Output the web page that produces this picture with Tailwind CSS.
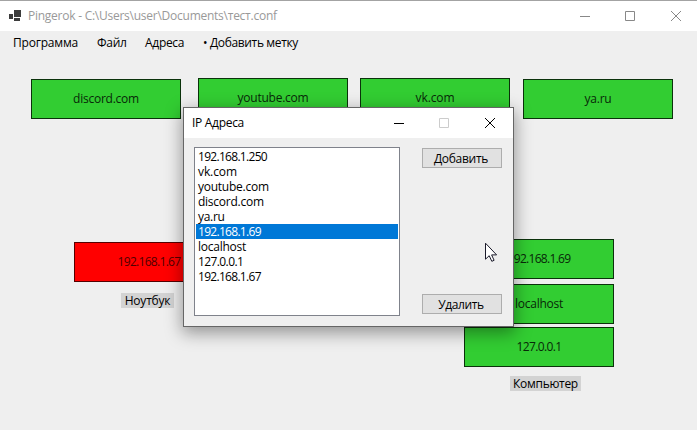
<!DOCTYPE html>
<html lang="ru">
<head>
<meta charset="utf-8">
<title>Pingerok</title>
<script src="https://cdn.jsdelivr.net/npm/@tailwindcss/browser@4"></script>
</head>
<body class="h-[430px] w-[697px] overflow-hidden bg-[#efefef] font-['Open_Sans','Noto_Sans',sans-serif] text-[12px] leading-[15px] text-black">
<div class="relative flex h-[430px] w-[697px] flex-col overflow-hidden">
  <header class="flex h-[31px] shrink-0 items-center border-t border-[#a3a3a3] bg-white text-[#999]">
    <svg class="ml-[9px] h-[12px] w-[12px] shrink-0" viewBox="0 0 12 12" fill="#3c3c3c" shape-rendering="crispEdges"><path d="M5 0h7v7H5zM0 4h4v5H0zM5 8h6v3H5z"/></svg>
    <span class="ml-[7px] w-[552px] pb-px whitespace-nowrap tracking-[-0.25px]">Pingerok - C:\Users\user\Documents\тест.conf</span>
    <svg class="h-[12px] w-[104px] shrink-0" viewBox="0 0 104 12" fill="none" stroke="#888"><path d="M0 6.500h10M45.500 1.500h9v9h-9zM91 1l10 10M101 1L91 11"/></svg>
  </header>
  <nav class="flex h-[25px] shrink-0 items-center gap-[19px] pb-[2px] pl-[13px] whitespace-nowrap">
    <span class="w-[65px] tracking-[-0.2px]">Программа</span>
    <span class="w-[29px] tracking-[-0.3px]">Файл</span>
    <span class="w-[39px] tracking-[-0.3px]">Адреса</span>
    <span class="w-[96px] tracking-[-0.35px]">• Добавить метку</span>
  </nav>
  <main class="*:pb-px">
    <div class="absolute top-[79px] left-[31px] flex h-[40px] w-[150px] items-center justify-center border border-[#0b320b] bg-[#32cd32] tracking-[-0.25px] text-[#082808]">discord.com</div>
    <div class="absolute top-[78px] left-[198px] flex h-[40px] w-[150px] items-center justify-center border border-[#0b320b] bg-[#32cd32] tracking-[-0.25px] text-[#082808]">youtube.com</div>
    <div class="absolute top-[78px] left-[360px] flex h-[40px] w-[150px] items-center justify-center border border-[#0b320b] bg-[#32cd32] tracking-[-0.1px] text-[#082808]">vk.com</div>
    <div class="absolute top-[79px] left-[523px] flex h-[40px] w-[150px] items-center justify-center border border-[#0b320b] bg-[#32cd32] tracking-[-0.2px] text-[#082808]">ya.ru</div>
    <div class="absolute top-[242px] left-[74px] flex h-[40px] w-[150px] items-center justify-center border border-[#500] bg-[#ff0000] tracking-[-0.7px] text-[#500000]">192.168.1.67</div>
    <div class="absolute top-[239px] left-[464px] flex h-[40px] w-[150px] items-center justify-center border border-[#0b320b] bg-[#32cd32] tracking-[-0.7px] text-[#082808]">192.168.1.69</div>
    <div class="absolute top-[284px] left-[464px] flex h-[40px] w-[150px] items-center justify-center border border-[#0b320b] bg-[#32cd32] tracking-[-0.25px] text-[#082808]">localhost</div>
    <div class="absolute top-[327px] left-[464px] flex h-[40px] w-[150px] items-center justify-center border border-[#0b320b] bg-[#32cd32] tracking-[-0.6px] text-[#082808]">127.0.0.1</div>
    <div class="absolute top-[293px] left-[121px] flex h-[15px] w-[53px] items-center justify-center bg-[#d3d3d3] tracking-[-0.2px]">Ноутбук</div>
    <div class="absolute top-[376px] left-[510px] flex h-[15px] w-[71px] items-center justify-center bg-[#d3d3d3] tracking-[-0.3px]">Компьютер</div>
  </main>
  <section class="absolute top-[107px] left-[183px] flex h-[220px] w-[331px] flex-col border border-[#666] bg-[#efefef] shadow-[0_5px_16px_1px_rgba(0,0,0,0.38)]">
    <div class="flex h-[30px] shrink-0 items-center bg-white pl-[8px]">
      <span class="w-[202px] pb-px tracking-[-0.3px]">IP Адреса</span>
      <svg class="h-[12px] w-[104px] shrink-0" viewBox="0 0 104 12" fill="none" stroke="#000"><path d="M0 6.500h10M91 1l10 10M101 1L91 11"/><path stroke="#ccc" d="M45.500 1.500h9v9h-9z"/></svg>
    </div>
    <div class="flex pt-[9px] pl-[10px]">
      <ul class="h-[169px] w-[206px] border border-[#7f828b] bg-white p-px whitespace-nowrap *:h-[15px] *:pl-[2px]">
        <li class="tracking-[-0.7px]">192.168.1.250</li>
        <li class="tracking-[-0.1px]">vk.com</li>
        <li class="tracking-[-0.25px]">youtube.com</li>
        <li class="tracking-[-0.25px]">discord.com</li>
        <li class="tracking-[-0.3px]">ya.ru</li>
        <li class="bg-[#0078d7] tracking-[-0.7px] text-white">192.168.1.69</li>
        <li class="tracking-[-0.25px]">localhost</li>
        <li class="tracking-[-0.6px]">127.0.0.1</li>
        <li class="tracking-[-0.7px]">192.168.1.67</li>
      </ul>
      <div class="ml-[22px] flex h-[167px] w-[80px] flex-col justify-between pt-px">
        <button class="h-[20px] border border-[#adadad] bg-[#e1e1e1] pt-px pr-[2px] leading-[15px] tracking-[-0.3px]">Добавить</button>
        <button class="h-[20px] border border-[#adadad] bg-[#e1e1e1] pt-px pr-[2px] leading-[15px] tracking-[-0.4px]">Удалить</button>
      </div>
    </div>
  </section>
  <svg class="absolute top-[242px] left-[485px] h-[21px] w-[13px]" viewBox="0 0 13 21"><path d="M.5 1.200v16l3.700-3.500 2.600 5.600 2.300-1-2.500-5.400h5z" fill="#fff" stroke="#1a1a2a"/></svg>
</div>
</body>
</html>
